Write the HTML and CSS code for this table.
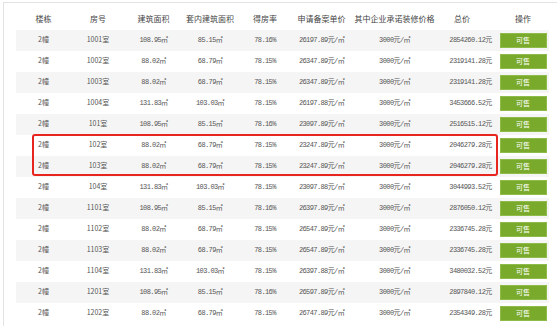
FILE: index.html
```html
<!DOCTYPE html>
<html lang="zh-CN">
<head>
<meta charset="utf-8">
<title>房源列表</title>
<link rel="stylesheet" href="styles.css">
</head>
<body>
<div class="frame">
  <table class="list">
    <colgroup>
      <col class="c1"><col class="c2"><col class="c3"><col class="c4"><col class="c5"><col class="c6"><col class="c7"><col class="c8"><col class="c9">
    </colgroup>
    <thead>
      <tr><th>楼栋</th><th>房号</th><th>建筑面积</th><th>套内建筑面积</th><th>得房率</th><th>申请备案单价</th><th>其中企业承诺装修价格</th><th class="th-total">总价</th><th>操作</th></tr>
    </thead>
    <tbody>
      <tr><td class="txt">2幢</td><td class="txt">1001室</td><td class="num">108.95㎡</td><td class="num">85.15㎡</td><td class="num">78.16%</td><td class="num">26197.89元/㎡</td><td class="num">3000元/㎡</td><td class="num total">2854260.12元</td><td class="op"><span class="btn">可售</span></td></tr>
      <tr><td class="txt">2幢</td><td class="txt">1002室</td><td class="num">88.02㎡</td><td class="num">68.79㎡</td><td class="num">78.15%</td><td class="num">26347.89元/㎡</td><td class="num">3000元/㎡</td><td class="num total">2319141.28元</td><td class="op"><span class="btn">可售</span></td></tr>
      <tr><td class="txt">2幢</td><td class="txt">1003室</td><td class="num">88.02㎡</td><td class="num">68.79㎡</td><td class="num">78.15%</td><td class="num">26347.89元/㎡</td><td class="num">3000元/㎡</td><td class="num total">2319141.28元</td><td class="op"><span class="btn">可售</span></td></tr>
      <tr><td class="txt">2幢</td><td class="txt">1004室</td><td class="num">131.83㎡</td><td class="num">103.03㎡</td><td class="num">78.15%</td><td class="num">26197.88元/㎡</td><td class="num">3000元/㎡</td><td class="num total">3453666.52元</td><td class="op"><span class="btn">可售</span></td></tr>
      <tr><td class="txt">2幢</td><td class="txt">101室</td><td class="num">108.95㎡</td><td class="num">85.15㎡</td><td class="num">78.16%</td><td class="num">23097.89元/㎡</td><td class="num">3000元/㎡</td><td class="num total">2516515.12元</td><td class="op"><span class="btn">可售</span></td></tr>
      <tr><td class="txt">2幢</td><td class="txt">102室</td><td class="num">88.02㎡</td><td class="num">68.79㎡</td><td class="num">78.15%</td><td class="num">23247.89元/㎡</td><td class="num">3000元/㎡</td><td class="num total">2046279.28元</td><td class="op"><span class="btn">可售</span></td></tr>
      <tr><td class="txt">2幢</td><td class="txt">103室</td><td class="num">88.02㎡</td><td class="num">68.79㎡</td><td class="num">78.15%</td><td class="num">23247.89元/㎡</td><td class="num">3000元/㎡</td><td class="num total">2046279.28元</td><td class="op"><span class="btn">可售</span></td></tr>
      <tr><td class="txt">2幢</td><td class="txt">104室</td><td class="num">131.83㎡</td><td class="num">103.03㎡</td><td class="num">78.15%</td><td class="num">23097.88元/㎡</td><td class="num">3000元/㎡</td><td class="num total">3044993.52元</td><td class="op"><span class="btn">可售</span></td></tr>
      <tr><td class="txt">2幢</td><td class="txt">1101室</td><td class="num">108.95㎡</td><td class="num">85.15㎡</td><td class="num">78.16%</td><td class="num">26397.89元/㎡</td><td class="num">3000元/㎡</td><td class="num total">2876050.12元</td><td class="op"><span class="btn">可售</span></td></tr>
      <tr><td class="txt">2幢</td><td class="txt">1102室</td><td class="num">88.02㎡</td><td class="num">68.79㎡</td><td class="num">78.15%</td><td class="num">26547.89元/㎡</td><td class="num">3000元/㎡</td><td class="num total">2336745.28元</td><td class="op"><span class="btn">可售</span></td></tr>
      <tr><td class="txt">2幢</td><td class="txt">1103室</td><td class="num">88.02㎡</td><td class="num">68.79㎡</td><td class="num">78.15%</td><td class="num">26547.89元/㎡</td><td class="num">3000元/㎡</td><td class="num total">2336745.28元</td><td class="op"><span class="btn">可售</span></td></tr>
      <tr><td class="txt">2幢</td><td class="txt">1104室</td><td class="num">131.83㎡</td><td class="num">103.03㎡</td><td class="num">78.15%</td><td class="num">26397.88元/㎡</td><td class="num">3000元/㎡</td><td class="num total">3480032.52元</td><td class="op"><span class="btn">可售</span></td></tr>
      <tr><td class="txt">2幢</td><td class="txt">1201室</td><td class="num">108.95㎡</td><td class="num">85.15㎡</td><td class="num">78.16%</td><td class="num">26597.89元/㎡</td><td class="num">3000元/㎡</td><td class="num total">2897840.12元</td><td class="op"><span class="btn">可售</span></td></tr>
      <tr><td class="txt">2幢</td><td class="txt">1202室</td><td class="num">88.02㎡</td><td class="num">68.79㎡</td><td class="num">78.15%</td><td class="num">26747.89元/㎡</td><td class="num">3000元/㎡</td><td class="num total">2354349.28元</td><td class="op"><span class="btn">可售</span></td></tr>
    </tbody>
  </table>
  <div class="highlight"></div>
</div>
</body>
</html>
```

FILE: styles.css
```css
html, body {
  margin: 0;
  padding: 0;
  background: #ffffff;
}
body {
  font-family: "Noto Sans CJK SC", "Noto Sans", sans-serif;
  color: #555;
  font-size: 8px;
  line-height: 10px;
}
.frame {
  position: relative;
  margin: 2px 0 0 3px;
  border-top: 1px solid #e3e3e3;
  border-left: 1px solid #e3e3e3;
  padding: 5px 0 2px 12px;
}
.list {
  width: 533px;
  table-layout: fixed;
  border-collapse: collapse;
  border-spacing: 0;
  font-size: 7px;
  line-height: 9px;
}
.c1 { width: 55px; }
.c2 { width: 54px; }
.c3 { width: 57px; }
.c4 { width: 56px; }
.c5 { width: 54px; }
.c6 { width: 59px; }
.c7 { width: 87px; }
.c8 { width: 59px; }
.c9 { width: 52px; }
.list th {
  height: 22px;
  padding: 0;
  font-weight: normal;
  font-size: 8px;
  line-height: 10px;
  color: #444;
  text-align: center;
  white-space: nowrap;
  vertical-align: middle;
}
.list th.th-total {
  padding-right: 11px;
}
.list td {
  height: 21px;
  padding: 0;
  text-align: center;
  white-space: nowrap;
  color: #555;
  vertical-align: middle;
  overflow: hidden;
}
.list tbody tr:nth-child(odd) td {
  background: #f5f5f5;
}
.list td.txt {
  font-family: "Noto Sans CJK SC", "Noto Sans", sans-serif;
  font-size: 7px;
  line-height: 9px;
  height: 18px;
  padding-bottom: 3px;
}
.list td.num {
  font-family: "Liberation Mono", "Noto Sans CJK SC", monospace;
  font-size: 7px;
  line-height: 9px;
  letter-spacing: -0.6px;
}
.list td.total {
  padding-left: 6px;
}
.list td.op {
  font-size: 0;
  line-height: 0;
}
.btn {
  display: block;
  margin: 0 auto;
  width: 47px;
  height: 15px;
  line-height: 13px;
  box-sizing: border-box;
  background: #7aaa2b;
  border: 1px solid #8fbb4a;
  color: #ffffff;
  font-family: "Noto Sans CJK SC", sans-serif;
  font-size: 7px;
  text-align: center;
}
.highlight {
  position: absolute;
  left: 28px;
  top: 131px;
  width: 466px;
  height: 42px;
  box-sizing: border-box;
  border: 2px solid #e8241f;
  border-radius: 3px;
  pointer-events: none;
}
```
